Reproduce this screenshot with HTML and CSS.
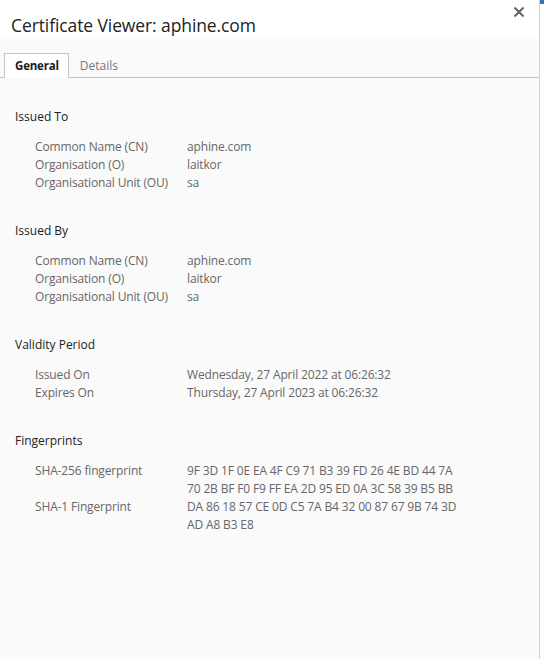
FILE: index.html
```html
<!DOCTYPE html>
<html>
<head>
<meta charset="utf-8">
<link rel="stylesheet" href="styles.css">
</head>
<body>
<div class="screen">
  <div class="dialog">
    <div class="header">
      <h1 class="title">Certificate Viewer: aphine.com</h1>
      <button class="close" aria-label="Close">
        <svg width="12" height="12" viewBox="0 0 12 12"><path d="M1.5 1.5 L10.5 10.5 M10.5 1.5 L1.5 10.5" stroke="#5f6368" stroke-width="2" fill="none"/></svg>
      </button>
    </div>
    <div class="body">
      <div class="tabs">
        <div class="tab active">General</div>
        <div class="tab">Details</div>
      </div>
      <div class="content">
        <section class="section">
          <h2 class="heading">Issued To</h2>
          <div class="rows">
            <div class="label">Common Name (CN)</div><div class="value">aphine.com</div>
            <div class="label">Organisation (O)</div><div class="value">laitkor</div>
            <div class="label">Organisational Unit (OU)</div><div class="value">sa</div>
          </div>
        </section>
        <section class="section">
          <h2 class="heading">Issued By</h2>
          <div class="rows">
            <div class="label">Common Name (CN)</div><div class="value">aphine.com</div>
            <div class="label">Organisation (O)</div><div class="value">laitkor</div>
            <div class="label">Organisational Unit (OU)</div><div class="value">sa</div>
          </div>
        </section>
        <section class="section">
          <h2 class="heading">Validity Period</h2>
          <div class="rows">
            <div class="label">Issued On</div><div class="value">Wednesday, 27 April 2022 at 06:26:32</div>
            <div class="label">Expires On</div><div class="value">Thursday, 27 April 2023 at 06:26:32</div>
          </div>
        </section>
        <section class="section">
          <h2 class="heading">Fingerprints</h2>
          <div class="rows">
            <div class="label">SHA-256 fingerprint</div><div class="value"><span class="line">9F 3D 1F 0E EA 4F C9 71 B3 39 FD 26 4E BD 44 7A</span><span class="line">70 2B BF F0 F9 FF EA 2D 95 ED 0A 3C 58 39 B5 BB</span></div>
            <div class="label">SHA-1 Fingerprint</div><div class="value"><span class="line">DA 86 18 57 CE 0D C5 7A B4 32 00 87 67 9B 74 3D</span><span class="line">AD A8 B3 E8</span></div>
          </div>
        </section>
      </div>
    </div>
  </div>
  <div class="side"><div class="side-accent"></div></div>
</div>
</body>
</html>
```

FILE: styles.css
```css
html, body {
  margin: 0;
  padding: 0;
  background: #ffffff;
}
body {
  font-family: "Open Sans", "Noto Sans", sans-serif;
  width: 544px;
  height: 659px;
  overflow: hidden;
}
.screen {
  display: flex;
  height: 659px;
}
.dialog {
  width: 539px;
  flex: none;
  display: flex;
  flex-direction: column;
  background: #fafafa;
  border-right: 1px solid #d0d0d0;
  box-shadow: 1px 0 1px rgba(0,0,0,0.12);
}
.header {
  height: 39px;
  background: #ffffff;
  display: flex;
  align-items: flex-start;
  justify-content: space-between;
  flex: none;
}
.title {
  margin: 14px 0 0 11px;
  font-size: 17.5px;
  font-weight: 400;
  line-height: 22px;
  color: #222222;
  letter-spacing: -0.1px;
}
.close {
  border: none;
  background: none;
  padding: 0;
  margin: 6px 14px 0 0;
  width: 12px;
  height: 12px;
  display: flex;
}
.body {
  flex: 1;
  display: flex;
  flex-direction: column;
}
.tabs {
  margin-top: 14px;
  display: flex;
  padding-left: 4px;
  border-bottom: 1px solid #c4c4c4;
  height: 24px;
}
.tab {
  font-size: 12px;
  line-height: 24px;
  color: #777777;
  padding: 0 10px;
  border: 1px solid transparent;
  border-bottom: none;
}
.tab.active {
  color: #1a1a1a;
  font-weight: 700;
  font-size: 11.5px;
  letter-spacing: -0.2px;
  padding: 0 9px 0 10px;
  background: #ffffff;
  border-color: #c4c4c4;
  margin-bottom: -1px;
  height: 24px;
}
.content {
  padding: 30px 0 0 15px;
  display: flex;
  flex-direction: column;
  gap: 30px;
}
.heading {
  margin: 0;
  font-size: 12px;
  font-weight: 400;
  line-height: 18px;
  color: #222222;
}
.rows {
  margin-top: 12px;
  padding-left: 20px;
  display: grid;
  grid-template-columns: 152px auto;
  font-size: 12px;
  line-height: 18px;
  color: #676767;
  letter-spacing: -0.15px;
}
.line {
  display: block;
}
.side {
  flex: 1;
  background: #ffffff;
}
.side-accent {
  height: 4px;
  background: #3b6fb6;
}
```
